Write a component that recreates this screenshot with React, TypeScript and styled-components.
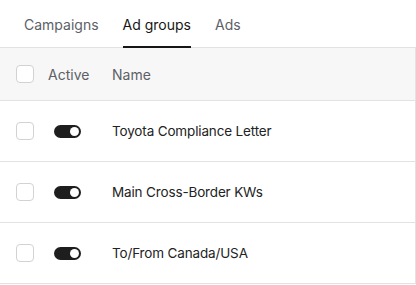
import React from "react";
import styled, { createGlobalStyle } from "styled-components";

const Global = createGlobalStyle`
  html, body { margin: 0; padding: 0; background: #fff; }
  body { font-family: Inter, "Noto Sans", sans-serif; -webkit-font-smoothing: antialiased; }
`;

const Page = styled.div`
  width: 416px;
  height: 285px;
  overflow: hidden;
  background: #fff;
`;

const Tabs = styled.div`
  display: flex;
  gap: 24px;
  padding-left: 24px;
  height: 47px;
  border-bottom: 1px solid #e2e2e2;
`;

const Tab = styled.div<{ $active?: boolean }>`
  display: flex;
  align-items: center;
  font-size: 14px;
  color: ${(p) => (p.$active ? "#161616" : "#5d6066")};
  border-bottom: 2px solid ${(p) => (p.$active ? "#161616" : "transparent")};
  margin-bottom: -1px;
  padding-top: 3px;
`;

const Table = styled.div`
  border-right: 1px solid #e2e2e2;
`;

const Row = styled.div<{ $header?: boolean }>`
  display: grid;
  grid-template-columns: 48px 64px 1fr;
  align-items: center;
  height: ${(p) => (p.$header ? "52px" : "60px")};
  background: ${(p) => (p.$header ? "#f7f7f7" : "#fff")};
  border-bottom: 1px solid #e2e2e2;
  font-size: ${(p) => (p.$header ? "14px" : "13.5px")};
  letter-spacing: ${(p) => (p.$header ? "0" : "-0.15px")};
  color: ${(p) => (p.$header ? "#5d6066" : "#232323")};
`;

const Checkbox = styled.div`
  width: 16px;
  height: 16px;
  margin-left: 16px;
  border: 1px solid #d2d2d2;
  border-radius: 4px;
  background: #fff;
`;

const Toggle = styled.div`
  width: 27px;
  height: 13px;
  margin-left: 6px;
  border-radius: 7px;
  background: #1e1e1e;
  position: relative;
  &::after {
    content: "";
    position: absolute;
    right: 2px;
    top: 2px;
    width: 9px;
    height: 9px;
    border-radius: 50%;
    background: #fff;
  }
`;

const rows = ["Toyota Compliance Letter", "Main Cross-Border KWs", "To/From Canada/USA"];

export default function App() {
  return (
    <Page>
      <Global />
      <Tabs>
        <Tab>Campaigns</Tab>
        <Tab $active>Ad groups</Tab>
        <Tab>Ads</Tab>
      </Tabs>
      <Table>
        <Row $header>
          <Checkbox />
          <span>Active</span>
          <span>Name</span>
        </Row>
        {rows.map((r) => (
          <Row key={r}>
            <Checkbox />
            <Toggle />
            <span>{r}</span>
          </Row>
        ))}
      </Table>
    </Page>
  );
}
